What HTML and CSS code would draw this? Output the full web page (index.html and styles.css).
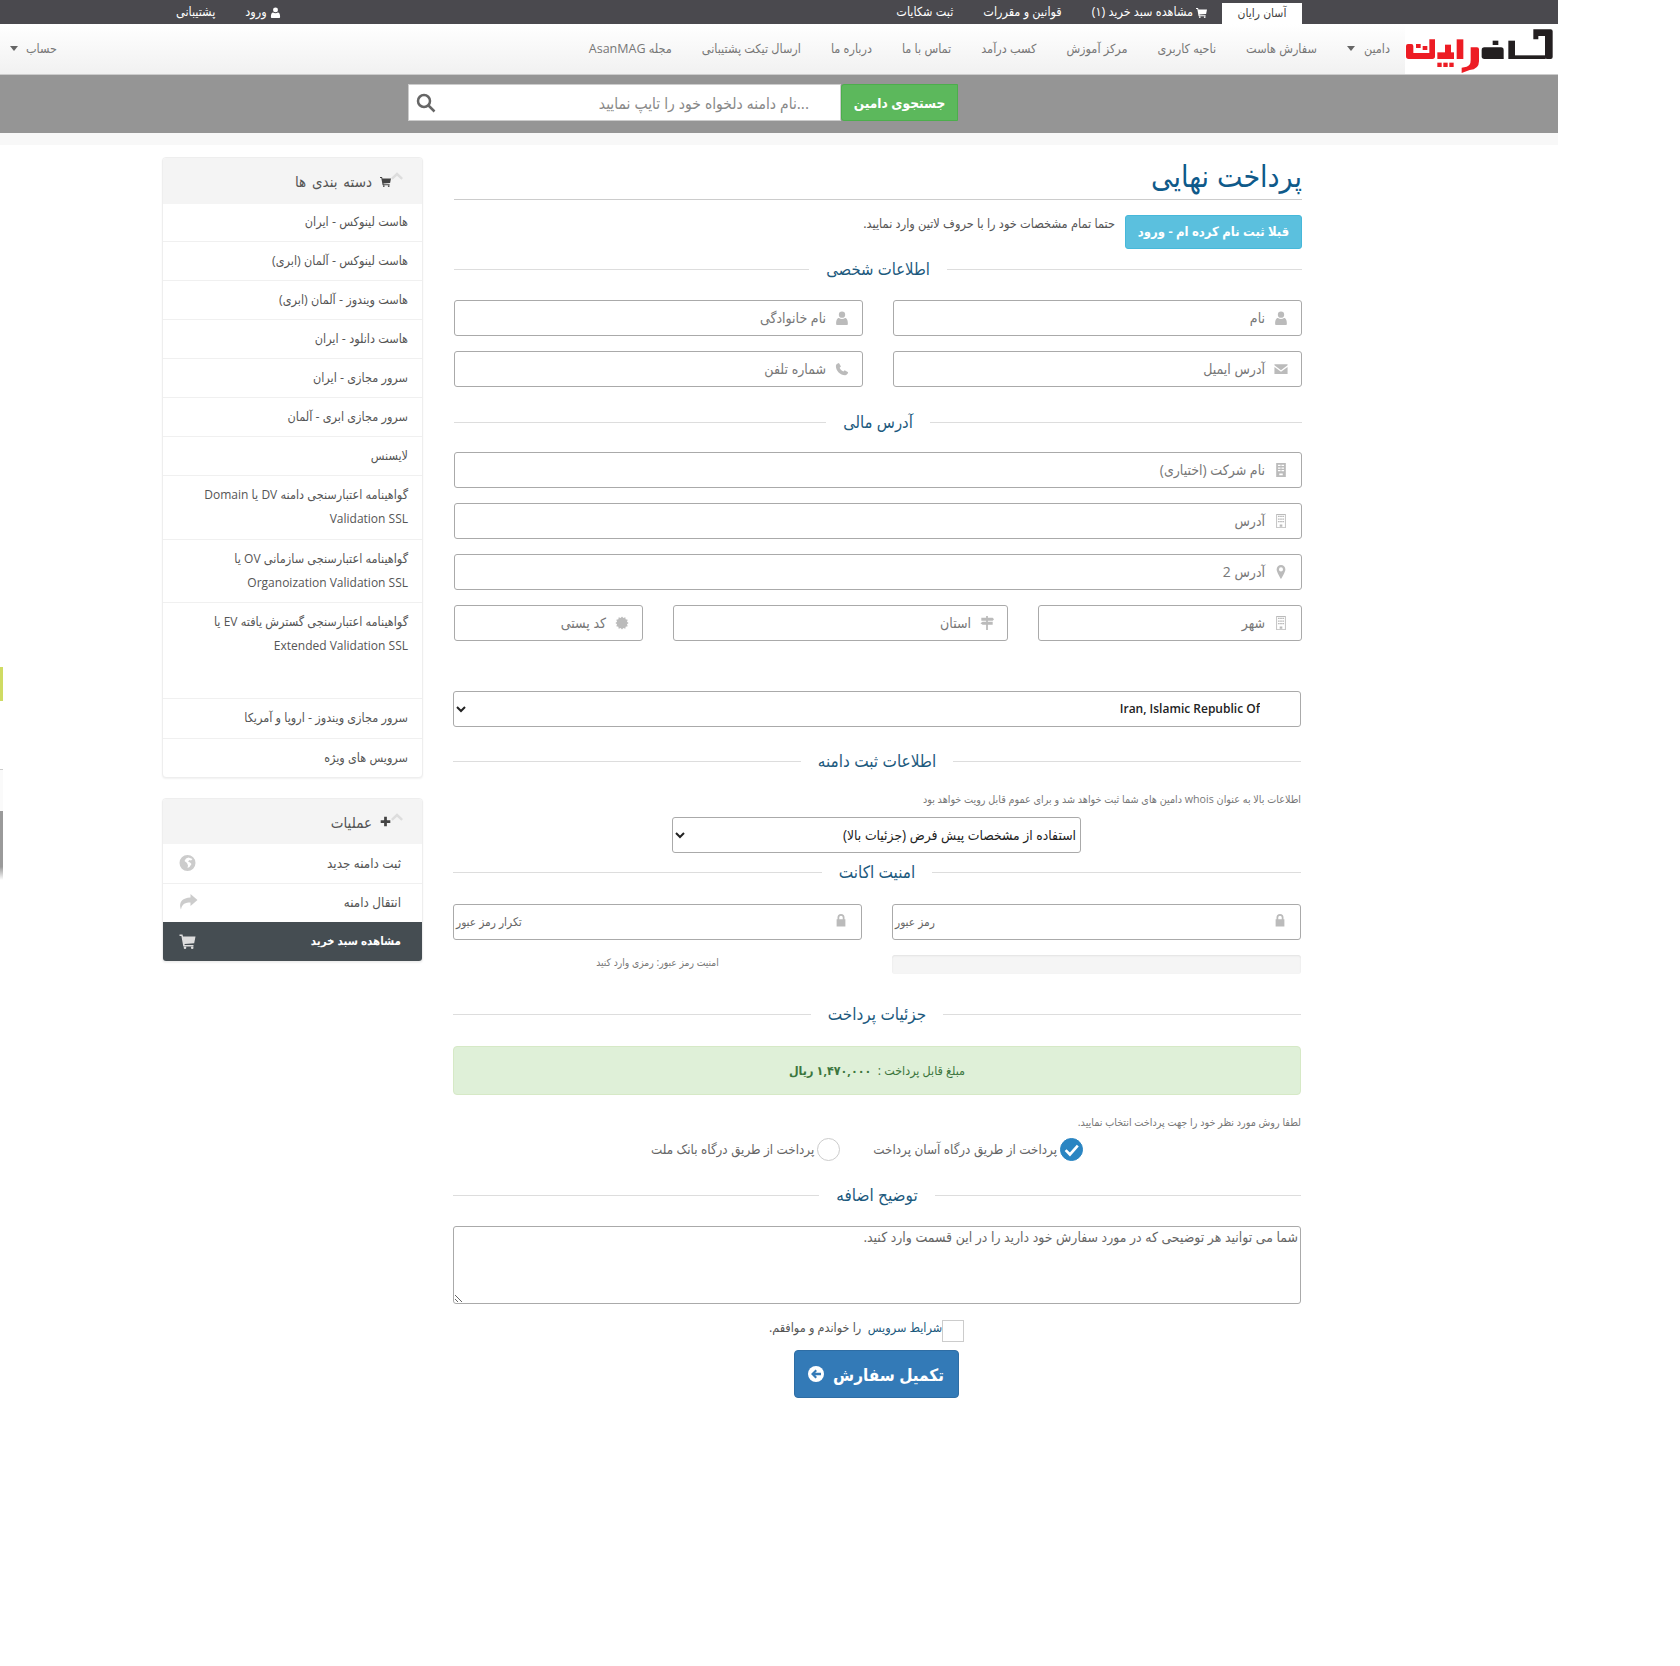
FILE: index.html
```html
<!DOCTYPE html>
<html lang="fa">
<head>
<meta charset="utf-8">
<title>پرداخت نهایی</title>
<link rel="stylesheet" href="styles.css">
</head>
<body>
<svg class="defs" width="0" height="0" aria-hidden="true">
  <symbol id="i-user" viewBox="0 0 16 16"><circle cx="8" cy="4.2" r="3.6"/><path d="M2.5 16c-.8 0-1.2-.6-1.2-1.4 0-3.6.9-6.6 3.3-6.6.9.8 2 1.2 3.4 1.2s2.500-.4 3.400-1.200c2.400 0 3.300 3 3.300 6.600 0 .8-.4 1.400-1.200 1.400z"/></symbol>
  <symbol id="i-mail" viewBox="0 0 16 16"><path d="M.5 2.500h15v1.300L8 9.300.5 3.800zM.5 5.600 8 11l7.500-5.400v8H.5z"/></symbol>
  <symbol id="i-phone" viewBox="0 0 16 16"><path d="M4.500 1 6.800 5 5.300 6.500c.8 1.900 2.300 3.500 4.200 4.300L11 9.300l4 2.300c-.3 1.800-1.800 3.400-3.500 3.400C6 15 1 10 1 4.500 1 2.800 2.700 1.300 4.500 1z"/></symbol>
  <symbol id="i-office" viewBox="0 0 16 16"><path fill-rule="evenodd" d="M2.500 0h11v16h-11zM4.500 2v1.500h3V2zM8.500 2v1.500h3V2zM4.500 5v1.500h3V5zM8.500 5v1.500h3V5zM4.500 8v1.500h3V8zM8.500 8v1.500h3V8zM6 12v2h4v-2z"/></symbol>
  <symbol id="i-grid" viewBox="0 0 16 16"><path fill-rule="evenodd" d="M2.500 0h11v16h-11zM3.500 1v14h9V1zM4.500 2h2v1.500h-2zM7 2h2v1.500H7zM9.500 2h2v1.500h-2zM4.500 5h2v1.500h-2zM7 5h2v1.500H7zM9.500 5h2v1.500h-2zM4.500 8h2v1.500h-2zM7 8h2v1.500H7zM9.500 8h2v1.500h-2zM6.500 12h3v2.500h-3z"/></symbol>
  <symbol id="i-pin" viewBox="0 0 16 16"><path fill-rule="evenodd" d="M8 0a5 5 0 0 0-5 5c0 3 5 11 5 11s5-8 5-11a5 5 0 0 0-5-5zm0 7.300a2.300 2.300 0 1 1 0-4.600 2.300 2.300 0 0 1 0 4.600z"/></symbol>
  <symbol id="i-signs" viewBox="0 0 16 16"><path d="M7 0h2v2h5.500l1.500 1.800L14.500 5.500H9v1h5.500V10H9v6H7v-6H3L.5 8.300 3 6.500h4v-1H1.500V2H7z"/></symbol>
  <symbol id="i-cert" viewBox="-1 -1 18 18"><polygon points="8,-.5 9.710,1.620 12.250,.64 12.670,3.330 15.360,3.750 14.380,6.290 16.500,8 14.380,9.710 15.360,12.250 12.670,12.670 12.250,15.360 9.710,14.380 8,16.500 6.290,14.380 3.750,15.360 3.330,12.670 .64,12.250 1.620,9.710 -.5,8 1.620,6.290 .64,3.750 3.330,3.330 3.750,.64 6.290,1.620"/></symbol>
  <symbol id="i-lock" viewBox="0 0 16 16"><path fill-rule="evenodd" d="M4 7V5a4 4 0 0 1 8 0v2h1v8.500H3V7zm2 0h4V5a2 2 0 0 0-4 0z"/></symbol>
  <symbol id="i-cart" viewBox="0 0 16 16"><path d="M0 1.500h3L3.500 3.500H16l-1.300 6.700L5 11l.2 1H14v1.500H3.800L1.900 3H0z"/><circle cx="5.500" cy="14.700" r="1.300"/><circle cx="12.700" cy="14.700" r="1.300"/></symbol>
  <symbol id="i-plus" viewBox="0 0 16 16"><path d="M6 1h4v5h5v4h-5v5H6v-5H1V6h5z"/></symbol>
  <symbol id="i-globe" viewBox="0 0 16 16"><path fill-rule="evenodd" d="M8 0a8 8 0 1 1 0 16A8 8 0 0 1 8 0zM9 2.500 6.500 3.500 5 6l2.500 2 1 2.500L8 13l2-1 2-3-1.500-1.500-2-1 1.500-1.500 1.500.5L13 4z"/></symbol>
  <symbol id="i-share" viewBox="0 0 18 16"><path d="M11 0l7 6-7 6V8.500C6 8.500 2.500 9.500 1.500 15.500 0 12.500-1 4 11 3.500z"/></symbol>
  <symbol id="i-up" viewBox="0 0 16 10"><path d="M8 0l8 7.500L13.800 10 8 4.500 2.200 10 0 7.500z"/></symbol>
  <symbol id="i-caret" viewBox="0 0 8 5"><path d="M0 0h8L4 5z"/></symbol>
</svg>

<div class="edge-accent"></div>
<div class="edge-ghost"></div>

<div class="page">
  <header class="topbar">
    <nav class="topbar-group">
      <a class="tab">آسان رایان</a>
      <a class="top-link"><svg class="ico-top"><use href="#i-cart"/></svg>مشاهده سبد خرید (۱)</a>
      <a class="top-link">قوانین و مقررات</a>
      <a class="top-link">ثبت شکایات</a>
    </nav>
    <nav class="topbar-group topbar-left">
      <a class="top-link"><svg class="ico-top"><use href="#i-user"/></svg>ورود</a>
      <a class="top-link">پشتیبانی</a>
    </nav>
  </header>

  <div class="navbar">
    <div class="logo">
      <svg viewBox="15 0 459 150" width="153" height="50" aria-label="آسان رایان">
        <g fill="#231f20">
          <path d="M400 16H452q6 0 6 6V99q0 6-6 6H441q-6 0-6-6V36H415V46H400z"/>
          <path d="M345 94h92v11H345z"/>
          <path d="M325 50h20v55H325z"/>
          <path d="M245 78q0-8 8-8h50q8 0 8 8v27H253q-8 0-8-8z"/>
          <rect x="278" y="50" width="17" height="13"/>
        </g>
        <g fill="#ed1c24">
          <path d="M212 70H231q6 0 6 6V112q0 24-28 26L185 147V131l15-3q12-3 12-20z"/>
          <path d="M170 46h20v59H170z"/>
          <path d="M112 85h50v20H112z"/>
          <path d="M135 62h18v25H135z"/>
          <path d="M18 66q0-6 6-6h10q6 0 6 6v21H88V46h17v51q0 8-8 8H26q-8 0-8-8z"/>
          <rect x="48" y="60" width="14" height="12"/>
          <rect x="68" y="66" width="14" height="12"/>
          <rect x="112" y="116" width="13" height="13"/>
          <rect x="130" y="116" width="13" height="13"/>
          <rect x="148" y="116" width="13" height="13"/>
        </g>
      </svg>
    </div>
    <nav class="menu">
      <a>دامین<svg class="caret"><use href="#i-caret"/></svg></a>
      <a>سفارش هاست</a>
      <a>ناحیه کاربری</a>
      <a>مرکز آموزش</a>
      <a>کسب درآمد</a>
      <a>تماس با ما</a>
      <a>درباره ما</a>
      <a>ارسال تیکت پشتیبانی</a>
      <a>مجله AsanMAG</a>
    </nav>
    <a class="account">حساب<svg class="caret"><use href="#i-caret"/></svg></a>
  </div>

  <div class="searchband">
    <div class="searchform">
      <button class="search-btn" type="button">جستجوی دامین</button>
      <div class="search-input">
        <span class="search-ph">...نام دامنه دلخواه خود را تایپ نمایید</span>
        <svg class="search-ico" viewBox="0 0 20 20"><circle cx="8" cy="8" r="6"/><path d="M12.500 12.500 18.500 18.500"/></svg>
      </div>
    </div>
  </div>
  <div class="stripe"></div>

  <div class="layout">
    <main class="main">
      <h1 class="title">پرداخت نهایی</h1>
      <div class="intro">
        <a class="btn-info">قبلا ثبت نام کرده ام - ورود</a>
        <p class="intro-text">حتما تمام مشخصات خود را با حروف لاتین وارد نمایید.</p>
      </div>

      <h2 class="sec sec-personal"><span>اطلاعات شخصی</span></h2>
      <div class="grid-two">
        <div class="field"><svg class="fi"><use href="#i-user"/></svg><span>نام</span></div>
        <div class="field"><svg class="fi"><use href="#i-user"/></svg><span>نام خانوادگی</span></div>
        <div class="field"><svg class="fi"><use href="#i-mail"/></svg><span>آدرس ایمیل</span></div>
        <div class="field"><svg class="fi"><use href="#i-phone"/></svg><span>شماره تلفن</span></div>
      </div>

      <h2 class="sec sec-billing"><span>آدرس مالی</span></h2>
      <div class="stack">
        <div class="field"><svg class="fi"><use href="#i-office"/></svg><span>نام شرکت (اختیاری)</span></div>
        <div class="field"><svg class="fi"><use href="#i-grid"/></svg><span>آدرس</span></div>
        <div class="field"><svg class="fi"><use href="#i-pin"/></svg><span>آدرس 2</span></div>
        <div class="grid-three">
          <div class="field"><svg class="fi"><use href="#i-grid"/></svg><span>شهر</span></div>
          <div class="field"><svg class="fi"><use href="#i-signs"/></svg><span>استان</span></div>
          <div class="field"><svg class="fi"><use href="#i-cert"/></svg><span>کد پستی</span></div>
        </div>
      </div>

      <div class="lower">
        <select class="sel sel-country"><option>Iran, Islamic Republic Of</option></select>

        <h2 class="sec sec-domain"><span>اطلاعات ثبت دامنه</span></h2>
        <p class="note note-domain">اطلاعات بالا به عنوان whois دامین های شما ثبت خواهد شد و برای عموم قابل رویت خواهد بود</p>
        <div class="sel-row"><select class="sel sel-contact"><option>استفاده از مشخصات پیش فرض (جزئیات بالا)</option></select></div>

        <h2 class="sec sec-security"><span>امنیت اکانت</span></h2>
        <div class="grid-two">
          <div class="field field-pw"><svg class="fi"><use href="#i-lock"/></svg><span>رمز عبور</span></div>
          <div class="field field-pw"><svg class="fi"><use href="#i-lock"/></svg><span>تکرار رمز عبور</span></div>
          <div class="strength"></div>
          <p class="strength-text">امنیت رمز عبور: رمزی وارد کنید</p>
        </div>

        <h2 class="sec sec-payment"><span>جزئیات پرداخت</span></h2>
        <div class="alert">مبلغ قابل پرداخت : &nbsp;<b>۱,۴۷۰,۰۰۰ ریال</b></div>
        <p class="note note-pay">لطفا روش مورد نظر خود را جهت پرداخت انتخاب نمایید.</p>
        <div class="radios">
          <span class="radio-item"><span class="radio radio-on"><svg viewBox="0 0 16 16"><path d="M3.500 8.500 6.800 11.800 12.800 5"/></svg></span>پرداخت از طریق درگاه آسان پرداخت</span>
          <span class="radio-item"><span class="radio"></span>پرداخت از طریق درگاه بانک ملت</span>
        </div>

        <h2 class="sec sec-extra"><span>توضیح اضافه</span></h2>
        <textarea class="notes" dir="rtl">شما می توانید هر توضیحی که در مورد سفارش خود دارید را در این قسمت وارد کنید.</textarea>

        <div class="terms"><span class="check"></span><a>شرایط سرویس</a>&nbsp; را خواندم و موافقم.</div>
        <div class="submit-row">
          <a class="btn-submit">تکمیل سفارش
            <svg class="submit-ico" viewBox="0 0 16 16"><circle cx="8" cy="8" r="8" fill="#fff"/><path d="M7.500 3.500 3 8l4.500 4.500L9 11 7.200 9.200H13V6.800H7.200L9 5z" fill="#337ab7"/></svg>
          </a>
        </div>
      </div>
    </main>

    <aside class="side">
      <section class="panel panel-cats">
        <h3 class="panel-head"><svg class="chev"><use href="#i-up"/></svg><svg class="head-ico"><use href="#i-cart"/></svg><span>دسته بندی ها</span></h3>
        <a class="row">هاست لینوکس - ایران</a>
        <a class="row">هاست لینوکس - آلمان (ابری)</a>
        <a class="row">هاست ویندوز - آلمان (ابری)</a>
        <a class="row">هاست دانلود - ایران</a>
        <a class="row">سرور مجازی - ایران</a>
        <a class="row">سرور مجازی ابری - آلمان</a>
        <a class="row">لایسنس</a>
        <a class="row row-loose">گواهینامه اعتبارسنجی دامنه <span class="lat">DV</span> یا <span class="lat">Domain</span> <span class="lat">Validation SSL</span></a>
        <a class="row">گواهینامه اعتبارسنجی سازمانی <span class="lat">OV</span> یا <span class="lat">Organoization Validation SSL</span></a>
        <a class="row row-tall">گواهینامه اعتبارسنجی گسترش یافته <span class="lat">EV</span> یا <span class="lat">Extended Validation SSL</span></a>
        <a class="row row-loose">سرور مجازی ویندوز - اروپا و آمریکا</a>
        <a class="row">سرویس های ویژه</a>
      </section>
      <section class="panel panel-ops">
        <h3 class="panel-head"><svg class="chev"><use href="#i-up"/></svg><svg class="head-ico"><use href="#i-plus"/></svg><span>عملیات</span></h3>
        <a class="row row-act"><span>ثبت دامنه جدید</span><svg class="act-ico"><use href="#i-globe"/></svg></a>
        <a class="row row-act"><span>انتقال دامنه</span><svg class="act-ico act-share"><use href="#i-share"/></svg></a>
        <a class="row row-act row-dark"><span>مشاهده سبد خرید</span><svg class="act-ico"><use href="#i-cart"/></svg></a>
      </section>
    </aside>
  </div>
</div>
</body>
</html>
```
FILE: styles.css
```css
* { box-sizing: border-box; }
html, body { margin: 0; padding: 0; background: #fff; }
body {
  min-height: 1666px;
  font-family: "Open Sans", "DejaVu Sans Condensed", "DejaVu Sans", sans-serif;
  font-size: 12px;
  color: #555;
  position: relative;
}
a { color: inherit; text-decoration: none; }
h1, h2, h3, p { margin: 0; font-weight: normal; }
.defs { position: absolute; }

.edge-accent { position: absolute; left: 0; top: 667px; width: 3px; height: 34px; background: #cfdb63; }
.edge-ghost {
  position: absolute; left: 0; top: 769px; width: 3px; height: 111px;
  border-top: 1px solid #ccc;
  background: linear-gradient(#fafafa 0, #fafafa 37%, #9a9a9a 37%, #9a9a9a 88%, #fff 100%);
}

.page { width: 1558px; direction: rtl; }

/* top bar */
.topbar {
  height: 24px; background: #4a494e; color: #fff;
  display: flex; justify-content: space-between;
  padding: 0 256px 0 176px;
}
.topbar-group { display: flex; align-items: flex-end; gap: 30px; }
.tab {
  width: 80px; height: 21px; background: #fff; color: #444;
  text-align: center; line-height: 20px; font-size: 12px;
  margin-left: -15px;
}
.top-link { height: 24px; line-height: 24px; font-size: 12.500px; display: flex; align-items: center; gap: 3px; }
.ico-top { width: 11px; height: 11px; fill: #fff; }

/* navbar */
.navbar {
  height: 51px;
  background: linear-gradient(#fff, #f1f1f1);
  border-bottom: 1px solid #ccc;
  display: flex; align-items: center;
  color: #777;
}
.logo { width: 153px; height: 50px; background: #fff; flex: none; }
.logo svg { display: block; }
.menu { display: flex; gap: 30px; margin: -2px 15px 0 0; font-size: 12.500px; }
.menu a { display: flex; align-items: center; gap: 9px; }
.account { margin: -2px auto 0 10px; display: flex; align-items: center; gap: 8px; font-size: 12.500px; }
.caret { width: 8px; height: 5px; fill: #666; }

/* search */
.searchband { height: 58px; background: #959595; padding: 9px 600px 0 0; }
.searchform { display: flex; width: 550px; height: 37px; }
.search-btn {
  width: 117px; height: 37px; border: 1px solid #4cae4c; background: #5cb85c; color: #fff;
  font: bold 13.600px "Open Sans", "DejaVu Sans Condensed", "DejaVu Sans", sans-serif;
  border-radius: 3px 0 0 3px; padding: 0;
}
.search-input {
  width: 433px; height: 37px; background: #fff; border: 1px solid #ccc;
  display: flex; align-items: center; justify-content: space-between;
  padding: 0 31px 0 7px; color: #888; font-size: 15.500px;
}
.search-ico { width: 20px; height: 20px; fill: none; stroke: #666; stroke-width: 2.500; }
.stripe { height: 12px; background: #f8f8f8; }

/* layout */
.layout { display: flex; gap: 31px; padding: 12px 256px 0 162px; align-items: flex-start; }
.main { width: 848px; flex: none; }
.side { width: 261px; flex: none; }

.title {
  font-size: 30px; line-height: 38px; height: 43px; color: #0f5a8a;
  border-bottom: 1px solid #ccc;
}
.intro { display: flex; align-items: flex-start; gap: 10px; margin-top: 15px; }
.btn-info {
  width: 177px; height: 34px; line-height: 31px; text-align: center;
  background: #5bc0de; border: 1px solid #46b8da; border-radius: 3px;
  color: #fff; font-weight: bold; font-size: 13px;
}
.intro-text { color: #555; font-size: 12.650px; line-height: 17px; }

.sec {
  display: flex; align-items: center; gap: 17px;
  height: 24px; font-size: 16.500px; color: #1d5a7e;
}
.sec span { margin-top: -2px; }
.sec::before, .sec::after { content: ""; flex: 1; height: 1px; background: #ddd; }
.lower .sec { font-size: 17px; }
.sec-personal { margin: 8px 0 19px; }
.sec-billing { margin: 23px 0 18px; }
.sec-domain { margin: 22px 0 0; }
.sec-security { margin: 7px 0 20px; }
.sec-payment { margin: 28px 0 20px; }
.sec-extra { margin: 22px 0 19px; }

.field {
  height: 36px; border: 1px solid #aaa; border-radius: 3px; background: #fff;
  display: flex; align-items: center; gap: 9px; padding: 0 13px;
  color: #777; font-size: 14px; min-width: 0;
}
.field span { margin-top: -2px; }
.fi { width: 14px; height: 14px; fill: #bbb; flex: none; }
.field-pw { justify-content: space-between; padding: 0 13px 0 2px; font-size: 11.800px; color: #666; }
.field-pw .fi { margin-top: -4px; }

.grid-two { display: grid; grid-template-columns: 1fr 1fr; gap: 15px 30px; }
.grid-three { display: grid; grid-template-columns: 264px 335px 1fr; gap: 30px; }
.stack { display: flex; flex-direction: column; gap: 15px; }

.lower { margin-top: 50px; position: relative; left: -1px; }
.sel {
  height: 36px; border: 1px solid #aaa; border-radius: 3px; background: #fff;
  font: 12px "Open Sans", "DejaVu Sans Condensed", "DejaVu Sans", sans-serif; color: #222;
  display: block; padding-bottom: 2px;
}
.sel-country { width: 100%; direction: rtl; padding-right: 36px; font-weight: 600; }
.sel-row { margin-top: 11px; padding-right: 220px; }
.sel-contact { width: 409px; direction: rtl; font-size: 13.800px; }
.note { font-size: 10.700px; color: #777; line-height: 14px; }
.note-domain { margin-top: 19px; }
.note-pay { margin-top: 20px; }

.strength { height: 19px; background: #f5f5f5; border-radius: 3px; box-shadow: inset 0 1px 2px rgba(0,0,0,.08); }
.strength-text { font-size: 10.300px; color: #777; text-align: center; line-height: 14px; }

.alert {
  height: 49px; background: #dff0d8; border: 1px solid #d6e9c6; border-radius: 4px;
  color: #3c763d; text-align: center; line-height: 47px; font-size: 12.400px;
}
.radios { display: flex; justify-content: center; gap: 33px; margin-top: 8px; padding-right: 20px; height: 24px; font-size: 13.300px; color: #666; }
.radio-item { display: flex; align-items: center; gap: 3px; }
.radio { width: 23px; height: 23px; border-radius: 50%; border: 1px solid #ccc; background: #fff; display: block; flex: none; }
.radio-on { background: #2a85c2; border-color: #2a85c2; }
.radio-on svg { display: block; width: 21px; height: 21px; fill: none; stroke: #fff; stroke-width: 2; }

.notes {
  display: block; width: 100%; height: 78px; border: 1px solid #aaa; border-radius: 3px;
  padding: 0 2px; font: 13.900px "Open Sans", "DejaVu Sans Condensed", "DejaVu Sans", sans-serif; color: #666;
}
.terms { display: flex; justify-content: center; align-items: flex-start; margin-top: 16px; padding-right: 21px; height: 22px; font-size: 12.500px; line-height: 16px; color: #555; }
.terms a { color: #1d5a7e; }
.check { width: 22px; height: 22px; border: 1px solid #ccc; flex: none; }
.submit-row { display: flex; justify-content: center; margin-top: 8px; padding-right: 2px; }
.btn-submit {
  width: 165px; height: 48px; background: #337ab7; border: 1px solid #2e6da4; border-radius: 4px;
  color: #fff; font-size: 17px; font-weight: 600;
  display: flex; align-items: center; justify-content: center; gap: 9px;
}
.submit-ico { width: 16px; height: 16px; flex: none; }

/* sidebar */
.panel {
  background: #fff; border: 1px solid #eee; border-radius: 4px;
  box-shadow: 0 1px 2px rgba(0,0,0,.06); overflow: hidden;
}
.panel-ops { margin-top: 20px; }
.panel-head {
  height: 46px; background: #f4f4f4; display: flex; align-items: center;
  padding: 0 19px; font-size: 15px; word-spacing: 2px; color: #555;
}
.panel-ops .panel-head { height: 45px; }
.chev { width: 12px; height: 8px; fill: #ddd; margin-top: -10px; }
.head-ico { width: 11px; height: 11px; fill: #444; margin-left: 8px; }
.row {
  display: block; padding: 7px 14px 7px 15px; line-height: 24px; border-top: 1px solid #f0f0f0;
  color: #555; font-size: 12.500px; min-height: 39px;
}
.lat { font-size: 12px; }
.panel-head + .row { border-top: 0; padding-top: 6px; min-height: 37px; }
.row-loose { padding-bottom: 8px; }
.row-tall { padding-bottom: 40px; }
.row-act { display: flex; justify-content: space-between; align-items: center; padding: 6px 21px 8px 16px; height: 39px; font-size: 13.300px; }
.panel-head + .row-act { min-height: 39px; padding-top: 6px; }
.act-ico { width: 17px; height: 16px; fill: #ccc; flex: none; }
.act-share { width: 19px; }
.row-dark { background: #454d52; color: #fff; font-weight: 600; border-top: 0; font-size: 11.500px; }
.row-dark .act-ico { fill: #ddd; }
```
